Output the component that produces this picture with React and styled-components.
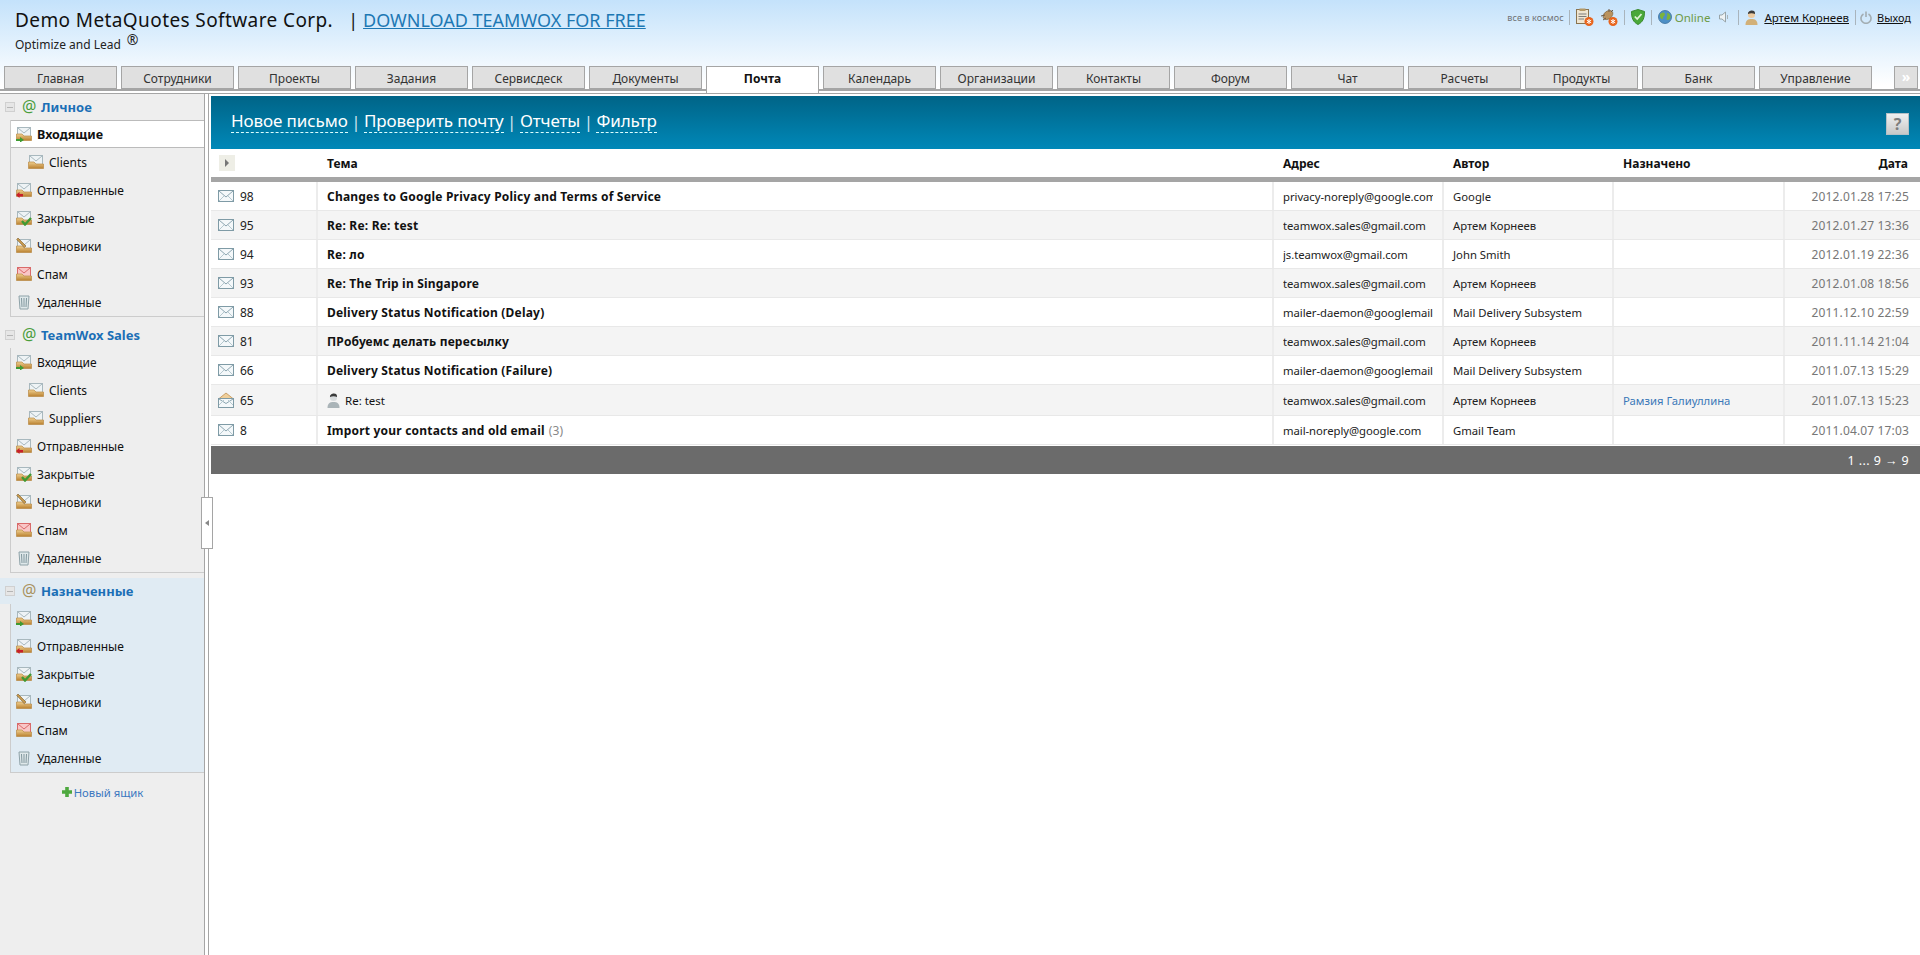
import React, { useId } from "react"
import styled, { createGlobalStyle } from "styled-components"

const FONT = `"Noto Sans", "Liberation Sans", sans-serif`

const GlobalStyle = createGlobalStyle`
  html, body { margin: 0; padding: 0; background: #fff; }
  body { font-family: ${FONT}; font-size: 11px; color: #111; overflow: hidden; }
  * { box-sizing: border-box; }
`

const Page = styled.div`
  width: 1920px;
  height: 955px;
  display: flex;
  flex-direction: column;
  overflow: hidden;
`
const TopArea = styled.div`
  background: linear-gradient(#c4e2fb, #ffffff 96%);
  border-bottom: 2px solid #a5a5a5;
  height: 91px;
  margin-bottom: 2px;
  flex: none;
`
const TitleBar = styled.div`
  height: 66px;
  display: flex;
  justify-content: space-between;
  padding: 9px 9px 0 15px;
`
const Brand = styled.div`
  display: flex;
  align-items: center;
  height: 22px;
  font-size: 18px;
  color: #111;
  white-space: nowrap;
`
const BrandName = styled.span`
  font-size: 19px;
  letter-spacing: 0.4px;
`
const BrandSep = styled.span`
  margin: 0 5px 0 15px;
`
const BrandLink = styled.a`
  color: #1d78b4;
  text-decoration: underline;
`
const Slogan = styled.div`
  margin-top: 5px;
  font-size: 12px;
  color: #222;
  display: flex;
  align-items: center;
`
const Reg = styled.span`
  font-size: 14px;
  margin: -10px 0 0 6px;
`
const Status = styled.div`
  display: flex;
  align-items: center;
  gap: 6px;
  height: 18px;
  margin-top: -1px;
  font-size: 11.5px;
`
const Cosmos = styled.span`
  font-size: 9px;
  letter-spacing: 0.1px;
  color: #6f7275;
  margin-right: -1px;
`
const StatusDivider = styled.i`
  width: 1px;
  height: 15px;
  background: #a9b4bc;
`
const Online = styled.span`
  color: #6e9a45;
  margin-left: -3px;
`
const SpeakerSlot = styled.span`
  display: flex;
  margin: 0 3px 0 3px;
`
const UserLink = styled.a`
  color: #111;
  text-decoration: underline;
`
const ExitLink = styled(UserLink)`
  font-size: 11px;
  margin-left: -1px;
`
const PowerSlot = styled.span`
  display: flex;
  margin-left: -2px;
`
const TabBar = styled.div`
  display: flex;
  gap: 4px;
  padding-left: 4px;
  height: 23px;
`
const Tab = styled.div`
  width: 113px;
  height: ${p => (p.$active ? "27px" : "23px")};
  background: ${p => (p.$active ? "#fff" : "#e0e0e0")};
  border: 1px solid #a5a5a5;
  border-bottom: ${p => (p.$active ? "none" : "1px solid #a5a5a5")};
  font-size: 12px;
  font-weight: ${p => (p.$active ? 700 : 400)};
  color: ${p => (p.$active ? "#111" : "#333")};
  display: flex;
  justify-content: center;
  padding-top: 3px;
  position: relative;
  z-index: 1;
`
const MoreTab = styled(Tab)`
  width: 24px;
  margin-left: 18px;
  color: #fff;
  font-size: 14px;
  font-weight: 700;
  padding-top: 0;
`
const Main = styled.div`
  flex: 1;
  display: flex;
  border-top: 1px solid #a5a5a5;
  min-height: 0;
  position: relative;
`
const Sidebar = styled.aside`
  width: 205px;
  flex: none;
  background: #eee;
  border-right: 1px solid #a5a5a5;
`
const Group = styled.section`
  margin-top: ${p => (p.$first ? 0 : "5px")};
  background: ${p => (p.$shared ? "linear-gradient(#e0ebf3 26px, #eee 26px)" : "none")};
`
const GroupHead = styled.div`
  height: 26px;
  display: flex;
  align-items: center;
  padding-left: 5px;
`
const Collapse = styled.span`
  width: 10px;
  height: 10px;
  border: 1px solid #d0d0d0;
  background: #e6e6e6;
  display: flex;
  align-items: center;
  justify-content: center;
  &::before {
    content: "";
    width: 6px;
    height: 1px;
    background: #b5b5b5;
  }
`
const At = styled.span`
  width: 14px;
  margin: -3px 0 0 7px;
  font-size: 16px;
  line-height: 1;
  color: ${p => (p.$shared ? "#a9925f" : "#4a9d3c")};
`
const GroupTitle = styled.span`
  margin-left: 5px;
  font-size: 13px;
  font-weight: 700;
  color: #1b6fb6;
`
const FolderList = styled.div`
  margin-left: 10px;
  border-left: 1px solid #ccc;
  border-bottom: 1px solid #ccc;
  background: ${p => (p.$shared ? "#e0ebf3" : "none")};
`
const Folder = styled.div`
  height: 28px;
  display: flex;
  align-items: center;
  gap: 5px;
  padding-left: ${p => (p.$nested ? "17px" : "5px")};
  font-size: 12px;
  color: #111;
  ${p => p.$active && `
    background: #fff;
    font-size: 12.5px;
    font-weight: 700;
    border-top: 1px solid #bbb;
    border-bottom: 1px solid #bbb;
  `}
`
const NewBox = styled.div`
  height: 38px;
  display: flex;
  align-items: center;
  justify-content: center;
  gap: 2px;
  padding-left: 1px;
  font-size: 11.3px;
  color: #3b78c0;
`
const Handle = styled.div`
  position: absolute;
  left: 201px;
  top: 403px;
  width: 12px;
  height: 52px;
  background: #fff;
  border: 1px solid #a5a5a5;
  display: flex;
  align-items: center;
  justify-content: center;
  &::before {
    content: "";
    border: 3px solid transparent;
    border-right: 4px solid #888;
    border-left: none;
  }
`
const Content = styled.main`
  flex: 1;
  margin-left: 3px;
  border-left: 1px solid #a5a5a5;
  padding: 2px 0 0 2px;
  min-width: 0;
`
const ActionBar = styled.div`
  height: 53px;
  background: linear-gradient(#006487, #0088b8);
  display: flex;
  align-items: center;
  justify-content: space-between;
  padding: 0 11px 2px 20px;
`
const Actions = styled.div`
  display: flex;
  align-items: center;
  font-size: 17px;
  letter-spacing: -0.1px;
  color: #cfe5ee;
`
const Action = styled.a`
  color: #fff;
  border-bottom: 1px dashed #dff;
  line-height: 22px;
`
const ActionSep = styled.span`
  margin: 0 3.5px;
  font-size: 17px;
`
const HelpButton = styled.div`
  width: 23px;
  height: 22px;
  margin-top: 5px;
  background: linear-gradient(#f0f0f0, #c8c8c8);
  border: 1px solid #b5c0c6;
  color: #7d7d7d;
  font-size: 16px;
  font-weight: 700;
  display: flex;
  align-items: center;
  justify-content: center;
`
const columns = "105px 956px 170px 170px 171px 1fr"
const TableHead = styled.div`
  display: grid;
  grid-template-columns: ${columns};
  height: 33px;
  border-bottom: 5px solid #a5a5a5;
  align-items: center;
  font-size: 12px;
  font-weight: 700;
  color: #111;
`
const HeadCell = styled.div`
  padding: 0 ${p => (p.$right ? "12px" : "11px")};
  text-align: ${p => (p.$right ? "right" : "left")};
`
const ExpandButton = styled.div`
  width: 16px;
  height: 16px;
  margin-left: 8px;
  background: #eeeee6;
  display: flex;
  align-items: center;
  justify-content: center;
  &::before {
    content: "";
    border: 4px solid transparent;
    border-left: 4px solid #777;
    border-right: none;
  }
`
const Row = styled.div`
  display: grid;
  grid-template-columns: ${columns};
  height: ${p => (p.$tall ? "31px" : "29px")};
  background: ${p => (p.$odd ? "#f4f4f4" : "#fff")};
  border-bottom: 1px solid #e8e8e8;
  font-size: 11.3px;
`
const Cell = styled.div`
  display: flex;
  align-items: center;
  padding: 0 9px;
  min-width: 0;
  overflow: hidden;
  white-space: nowrap;
  border-left: ${p => (p.$first ? "none" : "2px solid #ececec")};
  color: #222;
`
const IdCell = styled(Cell)`
  padding: 0 0 0 7px;
  gap: 6px;
  font-size: 12px;
`
const Subject = styled(Cell)`
  font-weight: ${p => (p.$read ? 400 : 700)};
  font-size: ${p => (p.$read ? "11.5px" : "12px")};
  letter-spacing: ${p => (p.$read ? 0 : "0.2px")};
  color: #111;
  gap: 5px;
`
const Count = styled.span`
  font-weight: 400;
  color: #888;
  margin-left: 4px;
`
const Clip = styled.span`
  display: block;
  width: 150px;
  overflow: hidden;
  letter-spacing: -0.05px;
`
const Assignee = styled.span`
  color: #3a78b8;
`
const DateCell = styled(Cell)`
  justify-content: flex-end;
  color: #777;
  font-size: 12px;
  letter-spacing: 0.15px;
  padding-right: 11px;
`
const TableFooter = styled.div`
  margin-top: 1px;
  height: 28px;
  background: #6b6b6b;
  color: #fff;
  font-size: 12.5px;
  letter-spacing: 0.4px;
  display: flex;
  align-items: center;
  justify-content: flex-end;
  padding-right: 11px;
`

// Small hand drawn icons, the originals are 16px bitmaps
const Envelope = ({ open }) => (
  <svg width="16" height="16" viewBox="0 0 16 16">
    {open && <path d="M0.5 7 L8 1 L15.5 7 L15.5 8 L0.5 8 Z" fill="#f0cf9a" stroke="#c9a06a" />}
    <rect x="0.5" y={open ? 6.5 : 2.5} width="15" height={open ? 9 : 11} fill="#f4f8fa" stroke="#7f9ba6" />
    <path d={open ? "M1 7 L8 11.5 L15 7" : "M1 3 L8 9 L15 3"} fill="none" stroke="#8ba5b0" />
    <path d="M1 13 L6 8 M15 13 L10 8" fill="none" stroke="#b5c8cf" />
  </svg>
)

const FolderIcon = ({ kind }) => {
  const id = useId()
  if (kind === "trash") {
    return (
      <svg width="16" height="16" viewBox="0 0 16 16">
        <path d="M3 2 H13 L12 15 H4 Z" fill="#dfe8ea" stroke="#8ea2a8" />
        <path d="M5.5 4 L6 13 M8 4 V13 M10.5 4 L10 13" stroke="#80969d" />
      </svg>
    )
  }
  const spam = kind === "spam"
  return (
    <svg width="16" height="16" viewBox="0 0 16 16">
      <defs>
        <linearGradient id={id} x1="0" y1="0" x2="0" y2="1">
          <stop offset="0" stopColor="#f0cf8e" />
          <stop offset="1" stopColor="#b9802f" />
        </linearGradient>
      </defs>
      <rect x="1.5" y="1.5" width="13" height="9" fill={spam ? "#f9c6c6" : "#eef3f5"} stroke={spam ? "#d96a6a" : "#a8b8be"} />
      <path d="M2 2 L8 7 L14 2" fill="none" stroke={spam ? "#d96a6a" : "#a8b8be"} />
      <path d="M0.5 8 H6 L8 10 H15.5 V14.5 H0.5 Z" fill={`url(#${id})`} stroke="#b98a45" strokeWidth="0.7" />
      {kind === "in" && <path d="M0 13 H4 V11 L8 14 L4 16.5 V15 H0 Z" fill="#3f9a32" />}
      {kind === "out" && <path d="M7 12 H3.5 V10 L0 13 L3.5 16 V14.5 H7 Z" fill="#c8202a" />}
      {kind === "closed" && <path d="M6 11 L9 14.5 L15 8" fill="none" stroke="#3f9a32" strokeWidth="2.4" />}
      {kind === "draft" && <path d="M2 0 L10 8 L8.5 9.5 L0.7 1.5 Z" fill="#c79a4e" stroke="#7d5c2a" strokeWidth="0.6" />}
    </svg>
  )
}

const UserIcon = ({ gray }) => (
  <svg width="13" height="16" viewBox="0 0 13 16">
    <path d="M0.5 16 C0.5 11 3 10 6.5 10 C10 10 12.5 11 12.5 16 Z" fill={gray ? "#aab4b8" : "#d2b078"} />
    <circle cx="6.5" cy="5.5" r="3.6" fill={gray ? "#d8dcde" : "#eccaa0"} />
    <path d="M3 5 C2.5 1 10 0 10 4 L10 5 C8 4 5 4 3 5 Z" fill="#3a3a3a" />
  </svg>
)

const DocBadgeIcon = () => (
  <svg width="18" height="18" viewBox="0 0 18 18">
    <rect x="0.5" y="1.5" width="12" height="14" fill="#efe6d2" stroke="#8a7450" />
    <rect x="3.5" y="0.5" width="6" height="2.5" fill="#b59a68" />
    <path d="M2.5 6 H10.5 M2.5 8.5 H10.5 M2.5 11 H8" stroke="#7c7c7c" />
    <circle cx="13" cy="13.5" r="4.5" fill="#e8641c" />
    <path d="M13 11 V16 M10.8 12.2 L15.2 14.8 M15.2 12.2 L10.8 14.8" stroke="#fff" />
  </svg>
)

const BugBadgeIcon = () => (
  <svg width="18" height="18" viewBox="0 0 18 18">
    <ellipse cx="8" cy="7" rx="5.5" ry="3.8" transform="rotate(-40 8 7)" fill="#b9925e" stroke="#7a5c34" strokeWidth="0.6" />
    <path d="M1 8 L5 7 M3 12 L6 10 M9 1 L9 4 M13 2 L11 4" stroke="#6a5a48" />
    <circle cx="13" cy="13.5" r="4.5" fill="#e8641c" />
    <path d="M13 11 V16 M10.8 12.2 L15.2 14.8 M15.2 12.2 L10.8 14.8" stroke="#fff" />
  </svg>
)

const ShieldIcon = () => (
  <svg width="14" height="16" viewBox="0 0 14 16">
    <path d="M7 0.5 L13.5 2.5 C13.5 9 12 13 7 15.5 C2 13 0.5 9 0.5 2.5 Z" fill="#4aa83a" stroke="#3b8a2e" />
    <path d="M3.8 7.5 L6.2 10 L10.5 5" fill="none" stroke="#dff3d6" strokeWidth="1.8" />
  </svg>
)

const GlobeIcon = () => (
  <svg width="14" height="14" viewBox="0 0 14 14">
    <circle cx="7" cy="7" r="6.5" fill="#4d8fc6" stroke="#3a6e9c" strokeWidth="0.8" />
    <path d="M2 4 C4 2 6 2 7 4 C7 6 5 6 5 8 C5 10 3 9 2 7 Z M9 3 C11 3 13 5 12.5 8 C11 10 9 11 8.5 9 C8.5 7 10 6 9 3 Z" fill="#7bb33d" />
  </svg>
)

const SpeakerIcon = () => (
  <svg width="10" height="12" viewBox="0 0 10 12">
    <path d="M0.5 4 H3 L6.5 1 V11 L3 8 H0.5 Z" fill="#eef2f4" stroke="#98a4a8" />
    <path d="M8.5 4 V8" stroke="#a8b2b6" />
  </svg>
)

const PowerIcon = () => (
  <svg width="12" height="13" viewBox="0 0 12 13">
    <path d="M3.5 3 A5 5 0 1 0 8.5 3" fill="none" stroke="#a3adb2" strokeWidth="1.6" />
    <path d="M6 0.5 V6" stroke="#a3adb2" strokeWidth="1.6" />
  </svg>
)

const PlusIcon = () => (
  <svg width="10" height="10" viewBox="0 0 10 10">
    <path d="M3.2 0 H6.8 V3.2 H10 V6.8 H6.8 V10 H3.2 V6.8 H0 V3.2 H3.2 Z" fill="#4da83e" />
  </svg>
)

const tabs = ["Главная", "Сотрудники", "Проекты", "Задания", "Сервисдеск", "Документы", "Почта", "Календарь", "Организации", "Контакты", "Форум", "Чат", "Расчеты", "Продукты", "Банк", "Управление"]

const baseFolders = [
  { title: "Отправленные", kind: "out" },
  { title: "Закрытые", kind: "closed" },
  { title: "Черновики", kind: "draft" },
  { title: "Спам", kind: "spam" },
  { title: "Удаленные", kind: "trash" },
]

const groups = [
  {
    title: "Личное",
    folders: [
      { title: "Входящие", kind: "in", active: true },
      { title: "Clients", kind: "plain", nested: true },
      ...baseFolders,
    ],
  },
  {
    title: "TeamWox Sales",
    folders: [
      { title: "Входящие", kind: "in" },
      { title: "Clients", kind: "plain", nested: true },
      { title: "Suppliers", kind: "plain", nested: true },
      ...baseFolders,
    ],
  },
  {
    title: "Назначенные",
    shared: true,
    folders: [{ title: "Входящие", kind: "in" }, ...baseFolders],
  },
]

const messages = [
  { id: 98, subject: "Changes to Google Privacy Policy and Terms of Service", address: "privacy-noreply@google.com", author: "Google", date: "2012.01.28 17:25" },
  { id: 95, subject: "Re: Re: Re: test", address: "teamwox.sales@gmail.com", author: "Артем Корнеев", date: "2012.01.27 13:36" },
  { id: 94, subject: "Re: ло", address: "js.teamwox@gmail.com", author: "John Smith", date: "2012.01.19 22:36" },
  { id: 93, subject: "Re: The Trip in Singapore", address: "teamwox.sales@gmail.com", author: "Артем Корнеев", date: "2012.01.08 18:56" },
  { id: 88, subject: "Delivery Status Notification (Delay)", address: "mailer-daemon@googlemail.com", author: "Mail Delivery Subsystem", date: "2011.12.10 22:59" },
  { id: 81, subject: "ПРобуемс делать пересылку", address: "teamwox.sales@gmail.com", author: "Артем Корнеев", date: "2011.11.14 21:04" },
  { id: 66, subject: "Delivery Status Notification (Failure)", address: "mailer-daemon@googlemail.com", author: "Mail Delivery Subsystem", date: "2011.07.13 15:29" },
  { id: 65, subject: "Re: test", address: "teamwox.sales@gmail.com", author: "Артем Корнеев", assignee: "Рамзия Галиуллина", date: "2011.07.13 15:23", read: true },
  { id: 8, subject: "Import your contacts and old email", count: 3, address: "mail-noreply@google.com", author: "Gmail Team", date: "2011.04.07 17:03" },
]

const App = () => (
  <Page>
    <GlobalStyle />
    <TopArea>
      <TitleBar>
        <div>
          <Brand>
            <BrandName>Demo MetaQuotes Software Corp.</BrandName>
            <BrandSep>|</BrandSep>
            <BrandLink>DOWNLOAD TEAMWOX FOR FREE</BrandLink>
          </Brand>
          <Slogan>
            Optimize and Lead <Reg>®</Reg>
          </Slogan>
        </div>
        <Status>
          <Cosmos>все в космос</Cosmos>
          <StatusDivider />
          <DocBadgeIcon />
          <BugBadgeIcon />
          <StatusDivider />
          <ShieldIcon />
          <StatusDivider />
          <GlobeIcon />
          <Online>Online</Online>
          <SpeakerSlot><SpeakerIcon /></SpeakerSlot>
          <StatusDivider />
          <UserIcon />
          <UserLink>Артем Корнеев</UserLink>
          <StatusDivider />
          <PowerSlot><PowerIcon /></PowerSlot>
          <ExitLink>Выход</ExitLink>
        </Status>
      </TitleBar>
      <TabBar>
        {tabs.map(title => (
          <Tab key={title} $active={title === "Почта"}>{title}</Tab>
        ))}
        <MoreTab>»</MoreTab>
      </TabBar>
    </TopArea>
    <Main>
      <Sidebar>
        {groups.map((group, index) => (
          <Group key={group.title} $first={index === 0} $shared={group.shared}>
            <GroupHead>
              <Collapse />
              <At $shared={group.shared}>@</At>
              <GroupTitle>{group.title}</GroupTitle>
            </GroupHead>
            <FolderList $shared={group.shared}>
              {group.folders.map(folder => (
                <Folder key={folder.title} $active={folder.active} $nested={folder.nested}>
                  <FolderIcon kind={folder.kind} />
                  {folder.title}
                </Folder>
              ))}
            </FolderList>
          </Group>
        ))}
        <NewBox>
          <PlusIcon />
          Новый ящик
        </NewBox>
      </Sidebar>
      <Handle />
      <Content>
        <ActionBar>
          <Actions>
            <Action>Новое письмо</Action>
            <ActionSep>|</ActionSep>
            <Action>Проверить почту</Action>
            <ActionSep>|</ActionSep>
            <Action>Отчеты</Action>
            <ActionSep>|</ActionSep>
            <Action>Фильтр</Action>
          </Actions>
          <HelpButton>?</HelpButton>
        </ActionBar>
        <TableHead>
          <ExpandButton />
          <HeadCell>Тема</HeadCell>
          <HeadCell>Адрес</HeadCell>
          <HeadCell>Автор</HeadCell>
          <HeadCell>Назначено</HeadCell>
          <HeadCell $right>Дата</HeadCell>
        </TableHead>
        {messages.map((message, index) => (
          <Row key={message.id} $odd={index % 2 === 1} $tall={message.read}>
            <IdCell $first>
              <Envelope open={message.read} />
              {message.id}
            </IdCell>
            <Subject $read={message.read}>
              {message.read && <UserIcon gray />}
              <span>
                {message.subject}
                {message.count && <Count>({message.count})</Count>}
              </span>
            </Subject>
            <Cell><Clip>{message.address}</Clip></Cell>
            <Cell>{message.author}</Cell>
            <Cell>{message.assignee && <Assignee>{message.assignee}</Assignee>}</Cell>
            <DateCell>{message.date}</DateCell>
          </Row>
        ))}
        <TableFooter>1 ... 9 → 9</TableFooter>
      </Content>
    </Main>
  </Page>
)

export default App
